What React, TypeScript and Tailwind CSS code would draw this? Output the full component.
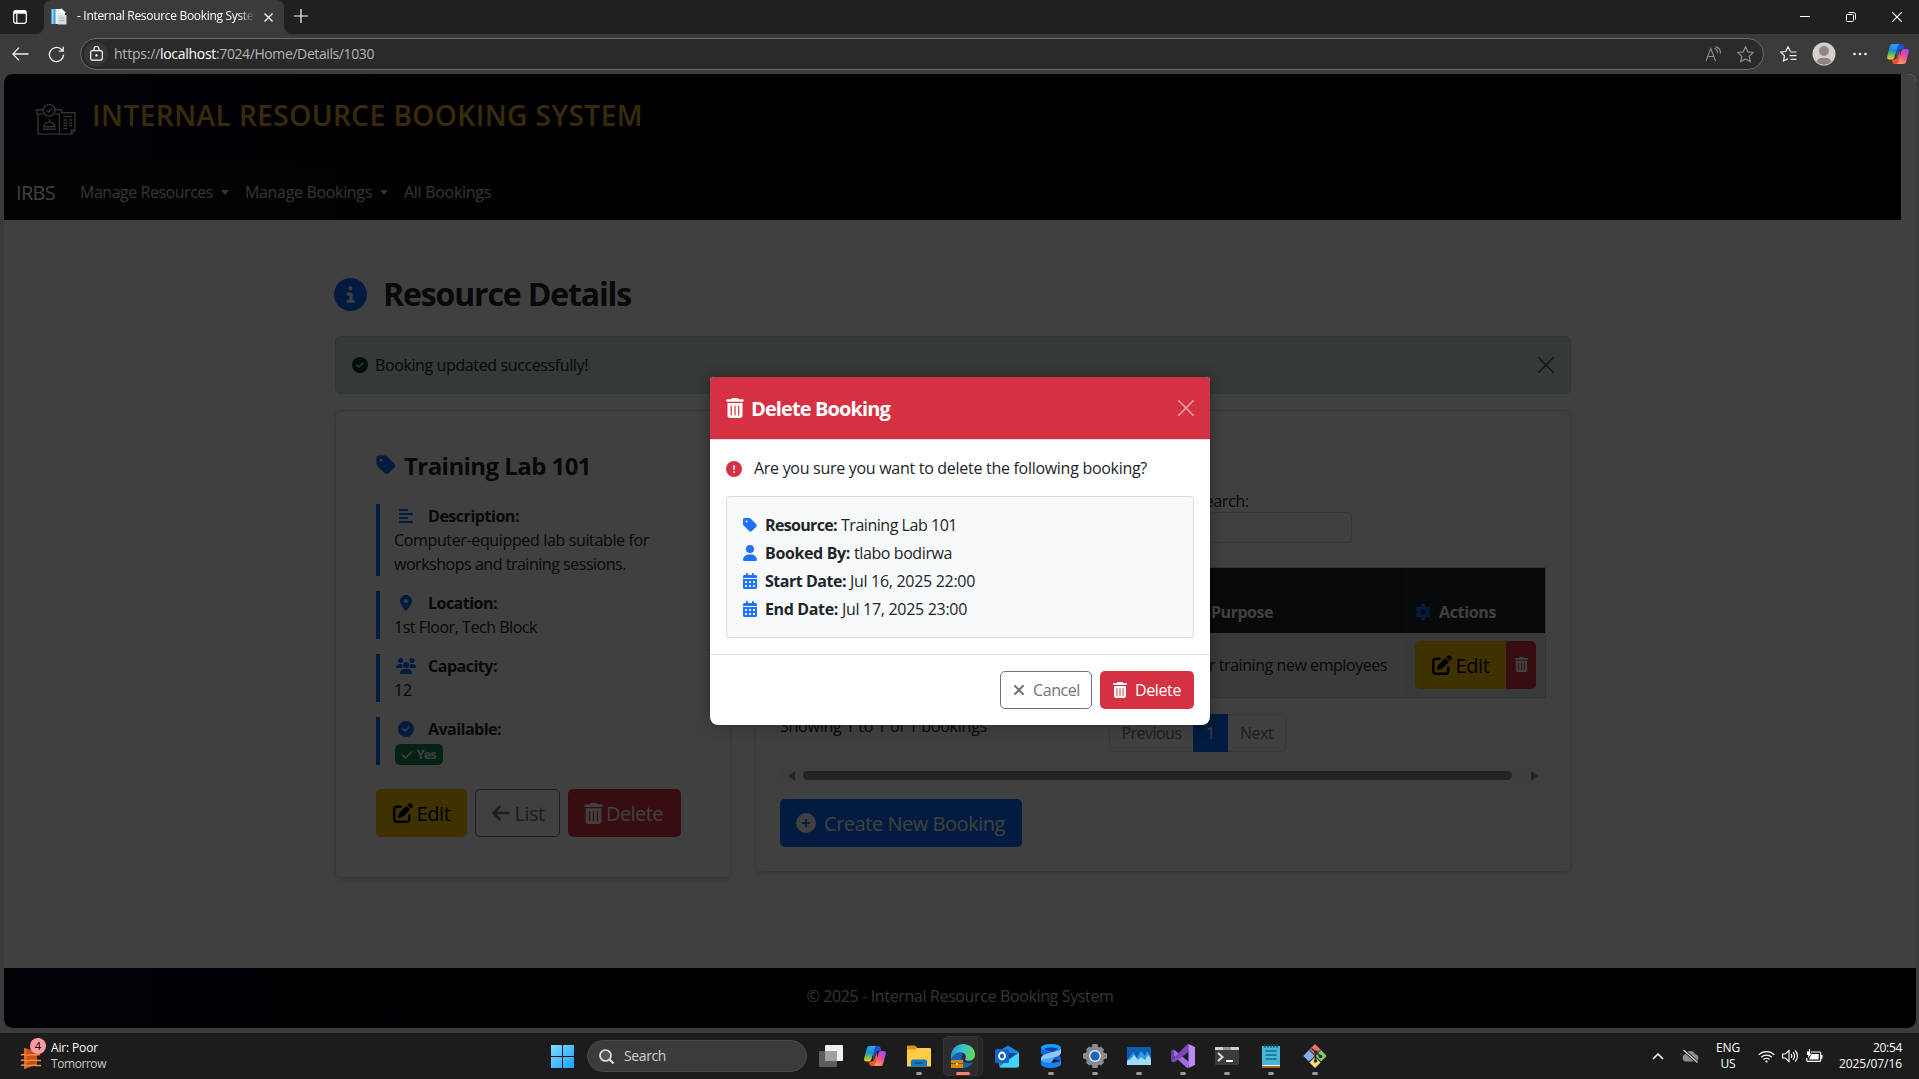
import React, { useLayoutEffect, useRef, useState } from "react";
import {
  FaAlignLeft,
  FaArrowLeft,
  FaCalendarDays,
  FaCheck,
  FaCircleCheck,
  FaCircleExclamation,
  FaCircleInfo,
  FaCirclePlus,
  FaGear,
  FaLocationDot,
  FaPenToSquare,
  FaTag,
  FaTrashCan,
  FaUser,
  FaUsers,
  FaXmark,
} from "react-icons/fa6";

/** One line of text whose letter spacing is adjusted so that it fills `w` pixels. */
function T({ w, children, className = "" }: { w: number; children: string; className?: string }) {
  const ref = useRef<HTMLSpanElement>(null);
  const [spacing, setSpacing] = useState(0);
  useLayoutEffect(() => {
    const el = ref.current;
    if (el) setSpacing((w - el.getBoundingClientRect().width) / children.length);
  }, [w, children]);
  return (
    <span ref={ref} className={"inline-block shrink-0 whitespace-pre " + className} style={{ letterSpacing: spacing }}>
      {children}
    </span>
  );
}

/* ---------- browser chrome ---------- */

function Copilot({ id }: { id: string }) {
  return (
    <svg width="22" height="21" viewBox="0 0 22 21">
      <defs>
        <linearGradient id={id + "a"} x1="0.3" y1="0" x2="0.2" y2="1">
          <stop offset="0" stopColor="#1fa6f5" />
          <stop offset="0.4" stopColor="#1f8fd8" />
          <stop offset="0.7" stopColor="#6cc04a" />
          <stop offset="1" stopColor="#f5d021" />
        </linearGradient>
        <linearGradient id={id + "b"} x1="0.7" y1="0" x2="0.3" y2="1">
          <stop offset="0" stopColor="#9a4fe8" />
          <stop offset="0.5" stopColor="#ee5091" />
          <stop offset="1" stopColor="#ffa15c" />
        </linearGradient>
      </defs>
      <path d="M9 0h5.2c1.500 0 2.200 1 2.600 2.400L17.500 5h-3c-1.600 0-2.400.8-2.900 2.400L9 15z" fill="#1d4fd7" />
      <path d="M13 20H7.800c-1.500 0-2.200-1-2.500-2.300L4.700 15.500h2.800c1.500 0 2.400-1 2.900-2.500L13 6z" fill="#f0502f" />
      <path d="M5.500 0H13c-1.400.2-2 1.200-2.500 2.800L7.600 12.700c-.5 1.800-1.300 2.800-3.100 2.800H2.400C.5 15.500-.3 14 .3 12L2.800 2.500C3.300.8 4 0 5.500 0z" fill={`url(#${id}a)`} />
      <path d="M16.500 20H9c1.400-.2 2-1.200 2.500-2.800l2.900-9.900c.5-1.700 1.300-2.400 3.100-2.400h2.100c1.900 0 2.700 1.300 2.100 3.200l-2.500 9.400c-.5 1.700-1.200 2.500-2.700 2.500z" fill={`url(#${id}b)`} />
    </svg>
  );
}

function TabStrip() {
  return (
    <div className="flex h-[34px] items-center bg-[#202020] text-white">
      <div className="flex h-full w-[44px] items-center bg-[#3b3b3b]">
        <div className="flex h-full w-full items-center rounded-br-[8px] bg-[#202020] pl-[13px]">
          <svg className="-mt-px" width="14" height="14" viewBox="0 0 14 14" fill="none" stroke="#fff" strokeWidth="1.2">
            <rect x="0.7" y="0.7" width="12.600" height="12.600" rx="2.200" />
            <path d="M1 2.800h12M1 1.700h12" strokeWidth="1.800" />
            <path d="M3.800 4v9" />
          </svg>
        </div>
      </div>
      <div className="flex h-full w-[240px] items-center rounded-t-[8px] bg-[#3b3b3b] pl-[6px]">
        <svg className="-mt-px" width="17" height="17" viewBox="0 0 17 17">
          <path d="M1 1h10l4 4v11H1z" fill="#e9eff2" />
          <path d="M1 1h4.500v15H1z" fill="#3f9bd5" />
          <path d="M2 1h1.500v15H2z" fill="#9fd3ee" />
          <path d="M8 7h8.500v9.500H8z" fill="#d5dbe0" />
          <path d="M11 0v5h5" fill="#fff" />
          <path d="M9.500 10h5M9.500 12.500h5" stroke="#a9b4bd" />
        </svg>
        <div className="ml-[10px] w-[180px] overflow-hidden pb-[2px] text-[12px] leading-4 [mask-image:linear-gradient(to_right,#000_90%,transparent_99%)]">
          <T w={187}>- Internal Resource Booking System</T>
        </div>
        <svg className="ml-[7px]" width="9" height="9" viewBox="0 0 9 9" stroke="#fff" strokeWidth="1.300">
          <path d="M.5.5l8 8M8.500.5l-8 8" />
        </svg>
      </div>
      <div className="flex h-full flex-1 items-center bg-[#3b3b3b]">
        <div className="flex h-full w-full items-center rounded-bl-[8px] bg-[#202020] pl-[10px]">
          <svg className="-mt-[2px]" width="14" height="14" viewBox="0 0 14 14" stroke="#fff" strokeWidth="1.200">
            <path d="M7 0v14M0 7h14" />
          </svg>
          <div className="ml-auto mr-[17px] flex items-center gap-[36px]">
            <svg width="10" height="10" viewBox="0 0 10 10" stroke="#fff"><path d="M0 4.500h10" /></svg>
            <svg width="10" height="10" viewBox="0 0 10 10" fill="none" stroke="#fff">
              <rect x="0.500" y="2.500" width="7" height="7" rx="1" />
              <path d="M2.500.5H7.500a2 2 0 0 1 2 2V7.500" />
            </svg>
            <svg width="10" height="10" viewBox="0 0 10 10" stroke="#fff" strokeWidth="1.200"><path d="M0 0l10 10M10 0L0 10" /></svg>
          </div>
        </div>
      </div>
    </div>
  );
}

const STAR = "M8 .8l2.200 4.700 5.100.6-3.800 3.500 1 5.100L8 12.200l-4.500 2.500 1-5.100L.7 6.100l5.100-.6z";

function Toolbar() {
  return (
    <div className="flex h-[40px] items-center bg-[#3b3b3b]">
      <svg className="ml-[12px]" width="17" height="14" viewBox="0 0 17 14" fill="none" stroke="#f0f0f0" strokeWidth="1.300">
        <path d="M7 .6L.8 7 7 13.400M.9 7H16.500" />
      </svg>
      <svg className="ml-[19px]" width="17" height="17" viewBox="0 0 17 17" fill="none" stroke="#f0f0f0" strokeWidth="1.300">
        <path d="M15.600 8.500A7.100 7.100 0 1 1 13 3L15 5M15.200.8V5.200H10.800" />
      </svg>
      <div className="ml-[15px] flex h-[32px] w-[1684px] items-center rounded-full border border-[#6b6b6b] bg-[#2a2a2a] pl-[3px] pr-[9px]">
        <div className="flex h-[24px] w-[24px] items-center justify-center rounded-full bg-[#363636]">
          <svg className="-mt-px" width="13" height="15" viewBox="0 0 13 15" fill="none" stroke="#fff" strokeWidth="1.200">
            <rect x="0.700" y="4.700" width="11.600" height="9.400" rx="1.600" />
            <path d="M4 4.500V3a2.500 2.500 0 0 1 5 0v1.500" />
            <circle cx="6.500" cy="9.400" r="0.600" fill="#fff" />
          </svg>
        </div>
        <div className="ml-[6px] flex text-[14px] leading-5 text-[#b4b4b4]">
          <T w={46}>https://</T>
          <T w={56} className="text-white">localhost</T>
          <T w={158}>:7024/Home/Details/1030</T>
        </div>
        <svg className="ml-auto" width="17" height="16" viewBox="0 0 17 16" fill="none" stroke="#8f8f8f" strokeWidth="1.100">
          <path d="M1 15L5.800 2.500 10.500 15M2.700 10.500h6.200M9.500 2.200a5 5 0 0 1 3 5M10.500.6a7 7 0 0 1 5 7" />
        </svg>
        <svg className="ml-[15px]" width="17" height="17" viewBox="0 0 16 16" fill="none" stroke="#8f8f8f" strokeWidth="1.100"><path d={STAR} /></svg>
      </div>
      <svg className="ml-[16px]" width="17" height="17" viewBox="0 0 17 17" fill="none" stroke="#f0f0f0" strokeWidth="1.200">
        <path d="M10.500 5.500L8 .9 5.800 5.500.7 6.100l3.800 3.600-1 5.300L8 12.600M10.500 6h6M9.500 9.700h7M10.500 13.300h6" />
      </svg>
      <svg className="ml-[15px]" width="24" height="24" viewBox="0 0 24 24">
        <circle cx="12" cy="12" r="11.500" fill="#d3d0cd" />
        <circle cx="12" cy="9" r="5" fill="#8c8886" />
        <path d="M4.500 20a7.600 5 0 0 1 15 0 11.500 11.500 0 0 1-15 0z" fill="#8c8886" />
      </svg>
      <svg className="ml-[17px]" width="14" height="4" viewBox="0 0 14 4" fill="#f0f0f0">
        <circle cx="1.500" cy="2" r="1.300" /><circle cx="7" cy="2" r="1.300" /><circle cx="12.500" cy="2" r="1.300" />
      </svg>
      <div className="ml-[20px]"><Copilot id="tb" /></div>
    </div>
  );
}

/* ---------- page ---------- */

function Caret() {
  return <span className="mt-[1px] h-0 w-0 border-x-[4.500px] border-t-[5px] border-x-transparent border-t-[#d4d4d4]" />;
}

function SiteHeader() {
  return (
    <header className="w-[1897px]">
      <div className="flex h-[90px] bg-linear-to-r from-[#07071c] to-black to-85% pl-[32px] pt-[21px]">
        <svg className="mt-[8px]" width="40" height="33" viewBox="0 0 41 33" fill="none" stroke="#c4c4c4" strokeWidth="1.500">
          <path d="M2 11v18.500a2 2 0 0 0 2 2h32l4-4V9.500H25.500M8 11H1V6.500h7M19 6.500h7v3M19 11h5v20.500M36 31.500v-4h4" />
          <circle cx="13.500" cy="7" r="6" />
          <path d="M10.800 7l2 2 3.500-4.200M7 26.500h13.500M8 24a5.800 5.800 0 0 1 11.500 0zM13.800 18v-2M28 13.500h9M28 17h4M34 17h3M28 20h4M34 20h3M28 23h4M34 23h3M28 26h4" />
        </svg>
        <h1 className="-mt-px ml-[16px] text-[28px] font-semibold leading-[42px] text-[#e0aa30]">
          <T w={551}>INTERNAL RESOURCE BOOKING SYSTEM</T>
        </h1>
      </div>
      <nav className="flex h-[56px] items-center bg-linear-to-r from-[#120606] to-black pl-[12px] text-[16px] text-[#d4d4d4]">
        <span className="pt-px text-[20px] text-white"><T w={39}>IRBS</T></span>
        <span className="ml-[25px] flex items-center gap-[8px]"><T w={133}>Manage Resources</T><Caret /></span>
        <span className="ml-[16px] flex items-center gap-[8px]"><T w={127}>Manage Bookings</T><Caret /></span>
        <span className="ml-[16px]"><T w={87}>All Bookings</T></span>
      </nav>
    </header>
  );
}

function Detail({ icon, label, w, children }: { icon: React.ReactNode; label: string; w: number; children: React.ReactNode }) {
  return (
    <div className="border-l-4 border-[#0d6efd] pl-[15px]">
      <div className="flex h-[24px] items-center">
        <span className="flex w-[22px] justify-center text-[16px] text-[#0d6efd]">{icon}</span>
        <T w={w} className="ml-[11px] font-bold">{label}</T>
      </div>
      <div className="-ml-px">{children}</div>
    </div>
  );
}

function ResourceCard() {
  return (
    <section className="h-[468px] w-[396px] rounded-[6px] border border-[#dcdcdc] px-[40px] pt-[39px] shadow-[0_2px_4px_rgba(0,0,0,0.12)]">
      <h2 className="-ml-px flex h-[32px] items-center text-[24px] font-bold">
        <FaTag className="-mt-[2px] text-[22px] text-[#0d6efd]" />
        <T w={187} className="ml-[7px]">Training Lab 101</T>
      </h2>
      <div className="mt-[22px] flex flex-col gap-[15px] leading-6">
        <Detail icon={<FaAlignLeft />} label="Description:" w={91}>
          <div><T w={255}>Computer-equipped lab suitable for</T></div>
          <div><T w={232}>workshops and training sessions.</T></div>
        </Detail>
        <Detail icon={<FaLocationDot />} label="Location:" w={69}>
          <div><T w={143}>1st Floor, Tech Block</T></div>
        </Detail>
        <Detail icon={<FaUsers className="text-[20px]" />} label="Capacity:" w={69}>
          <div><T w={18}>12</T></div>
        </Detail>
        <Detail icon={<FaCircleCheck />} label="Available:" w={73}>
          <div className="ml-px flex h-[24px] items-end">
            <span className="flex h-[21px] w-[48px] items-center rounded-[5px] bg-[#198754] pl-[6px] text-[12px] font-bold leading-[21px] text-white">
              <FaCheck className="mr-[4px]" /><T w={19}>Yes</T>
            </span>
          </div>
        </Detail>
      </div>
      <div className="mt-[24px] flex gap-[8px] text-[20px]">
        <div className="flex h-[48px] w-[91px] items-center justify-center gap-[4px] rounded-[5px] bg-[#ffc107] text-black">
          <FaPenToSquare /><T w={34} className="pt-px">Edit</T>
        </div>
        <div className="flex h-[48px] w-[85px] items-center justify-center gap-[4px] rounded-[5px] border border-[#6c757d] text-[#6c757d]">
          <FaArrowLeft /><T w={30} className="pt-px">List</T>
        </div>
        <div className="flex h-[48px] w-[113px] items-center gap-[2px] rounded-[5px] bg-[#dc3545] pl-[15px] text-white">
          <FaTrashCan className="text-[21px]" /><T w={57} className="pt-px">Delete</T>
        </div>
      </div>
    </section>
  );
}

function BookingsCard() {
  return (
    <section className="h-[462px] w-[816px] rounded-[6px] border border-[#dcdcdc] px-[24px] pt-[78px] shadow-[0_2px_4px_rgba(0,0,0,0.12)]">
      <div className="ml-[416px] w-[156px] leading-6">
        <div><T w={53}>Search:</T></div>
        <div className="-mt-px h-[31px] rounded-[4px] border border-[#d4d8dc]" />
      </div>
      <div className="mt-[24px] border border-[#c9d0cd] bg-[#212529] font-bold text-white">
        <div className="flex h-[65px] items-end leading-6">
          <div className="flex h-full w-[626px] items-end border-r border-[#32383e] pb-[9px] pl-[430px]"><T w={62}>Purpose</T></div>
          <div className="flex items-center pb-[9px] pl-[8px]">
            <FaGear className="text-[16px] text-[#0d6efd]" />
            <T w={57} className="ml-[8px]">Actions</T>
          </div>
        </div>
        <div className="flex h-[64px] items-center bg-[#e4eae7] font-normal text-[#212529]">
          <div className="flex h-full w-[626px] items-center justify-end border-r border-[#d5dbd8] pr-[19px]">
            <T w={195}>For training new employees</T>
          </div>
          <div className="ml-[8px] flex h-[48px]">
            <div className="flex w-[91px] items-center justify-center gap-[4px] rounded-l-[5px] bg-[#ffc107] text-[20px] text-black">
              <FaPenToSquare /><T w={34} className="pt-px">Edit</T>
            </div>
            <div className="flex w-[30px] items-center justify-center rounded-r-[5px] bg-[#dc3545] text-white">
              <FaTrashCan className="-mt-px text-[15px]" />
            </div>
          </div>
        </div>
      </div>
      <div className="mt-[16px] flex">
        <div className="w-[329px] leading-6"><T w={207}>Showing 1 to 1 of 1 bookings</T></div>
        <div className="flex h-[38px] rounded-[5px] border border-[#dee2e6] text-[#6c757d]">
          <div className="flex w-[83px] items-center justify-center"><T w={60}>Previous</T></div>
          <div className="-my-px flex w-[35px] items-center justify-center bg-[#0d6efd] text-white">1</div>
          <div className="flex w-[57px] items-center justify-center"><T w={33}>Next</T></div>
        </div>
      </div>
      <div className="mt-[16px] flex h-[15px] items-center bg-[#fcfcfc]">
        <span className="ml-[8px] border-y-[5px] border-r-[7px] border-y-transparent border-r-[#8a8a8a]" />
        <span className="ml-[8px] h-[9px] w-[709px] rounded-full bg-[#8a8a8a]" />
        <span className="ml-[19px] border-y-[5px] border-l-[7px] border-y-transparent border-l-[#8a8a8a]" />
      </div>
      <div className="mt-[16px] flex h-[48px] w-[242px] items-center rounded-[5px] bg-[#0d6efd] pl-[16px] text-[20px] text-white">
        <FaCirclePlus /><T w={181} className="ml-[8px] pt-px">Create New Booking</T>
      </div>
    </section>
  );
}

function DeleteModal() {
  const rows = [
    { icon: <FaTag />, label: "Resource:", lw: 72, value: "Training Lab 101", vw: 116 },
    { icon: <FaUser />, label: "Booked By:", lw: 85, value: "tlabo bodirwa", vw: 98 },
    { icon: <FaCalendarDays />, label: "Start Date:", lw: 81, value: "Jul 16, 2025 22:00", vw: 125 },
    { icon: <FaCalendarDays />, label: "End Date:", lw: 73, value: "Jul 17, 2025 23:00", vw: 125 },
  ];
  return (
    <div className="absolute left-[706px] top-[303px] h-[348px] w-[500px] rounded-[8px] rounded-t-[4px] bg-white text-[16px] text-[#212529] shadow-[0_0_14px_rgba(0,0,0,0.35)]">
      <div className="flex h-[62px] items-center rounded-t-[4px] bg-[#d63043] px-[16px] text-white">
        <FaTrashCan className="-ml-px text-[20px]" />
        <T w={139} className="ml-[6px] pt-[2px] text-[20px] font-bold">Delete Booking</T>
        <svg className="ml-auto" width="16" height="16" viewBox="0 0 16 16" stroke="#fff" strokeWidth="1.600" strokeLinecap="round" opacity="0.550">
          <path d="M.8.8l14.400 14.400M15.200.8L.8 15.200" />
        </svg>
      </div>
      <div className="h-[215px] border-t border-[#dee2e6] px-[16px] pt-[16px]">
        <div className="flex h-[26px] items-center">
          <FaCircleExclamation className="-mt-px text-[#d63043]" />
          <T w={393} className="-mt-[2px] ml-[12px]">Are you sure you want to delete the following booking?</T>
        </div>
        <div className="mt-[14px] h-[142px] rounded-[4px] border border-[#d9dcdf] bg-[#f8f9fa] px-[16px] pt-[14px]">
          {rows.map((r) => (
            <div key={r.label} className="flex h-[28px] items-center">
              <span className="flex w-[14px] justify-center text-[16px] text-[#1f72fc]">{r.icon}</span>
              <T w={r.lw} className="ml-[8px] font-bold">{r.label}</T>
              <T w={r.vw} className="ml-[4px]">{r.value}</T>
            </div>
          ))}
        </div>
      </div>
      <div className="flex h-[71px] items-start justify-end gap-[8px] border-t border-[#dee2e6] px-[16px] pt-[16px]">
        <div className="flex h-[38px] w-[92px] items-center rounded-[5px] border border-[#6c757d] pl-[10px] text-[#6c757d]">
          <FaXmark /><T w={47} className="ml-[6px]">Cancel</T>
        </div>
        <div className="flex h-[38px] w-[94px] items-center rounded-[5px] bg-[#d63043] pl-[13px] text-white">
          <FaTrashCan className="-ml-px" /><T w={46} className="ml-[7px]">Delete</T>
        </div>
      </div>
    </div>
  );
}

function Page() {
  return (
    <div className="bg-[#3b3b3b] pb-[5px] pl-[4px] pr-[3px]">
      <div className="relative flex h-[954px] flex-col overflow-hidden rounded-[8px] bg-white text-[16px] text-[#212529]">
        <SiteHeader />
        <main className="ml-[331px] h-[748px] w-[1236px] pt-[56px]">
          <h1 className="flex h-[38px] items-center text-[32px] font-bold">
            <FaCircleInfo className="-ml-px -mt-px text-[33px] text-[#0d6efd]" />
            <T w={248} className="-mt-[2px] ml-[16px]">Resource Details</T>
          </h1>
          <div className="mt-[22px] flex h-[58px] items-center rounded-[5px] border border-[#bcd5ca] bg-[#d1e1da] px-[16px] text-[#0a3622]">
            <FaCircleCheck className="text-[16px]" />
            <T w={213} className="ml-[7px]">Booking updated successfully!</T>
            <svg className="ml-auto" width="16" height="16" viewBox="0 0 16 16" stroke="#000" strokeWidth="1.600" strokeLinecap="round" opacity="0.600">
              <path d="M.8.8l14.400 14.400M15.200.8L.8 15.200" />
            </svg>
          </div>
          <div className="mt-[16px] flex items-start justify-between">
            <ResourceCard />
            <BookingsCard />
          </div>
        </main>
        <footer className="flex h-[60px] items-center justify-center bg-linear-to-r from-[#07071c] to-black to-85% pb-[4px] text-[#d4d4d4]">
          <T w={307}>© 2025 - Internal Resource Booking System</T>
        </footer>
        <div className="absolute inset-0 bg-black/75" />
        <DeleteModal />
      </div>
    </div>
  );
}

/* ---------- taskbar ---------- */

function Slot({ children, running = false }: { children: React.ReactNode; running?: boolean }) {
  return (
    <div className="relative flex h-full w-[44px] items-center justify-center">
      {children}
      {running && <span className="absolute bottom-[4px] left-[19px] h-[3px] w-[6px] rounded-full bg-[#9a9a9a]" />}
    </div>
  );
}

function Taskbar() {
  return (
    <div className="relative flex h-[46px] items-center bg-[#1c1c1c] text-[12px] leading-4 text-white">
      <svg className="ml-[20px]" width="28" height="34" viewBox="0 0 28 34">
        <path d="M4 9l13 3v14L4 30z" fill="#c94f12" />
        <path d="M4 9l3 1v19l-3 1z" fill="#e0671f" />
        <path d="M1 16c3-1.500 5 1 8 0s5 .5 11-.5M1 21.500c3-1.500 5 1 8 0s5 .5 12 0M1 26.500c3-1.500 5 1 8 0s5 .5 12 0" stroke="#f08a4a" strokeWidth="1.500" fill="none" />
      </svg>
      <span className="absolute left-[30px] top-[5px] flex h-[16px] w-[16px] items-center justify-center rounded-full bg-[#ff99a4] text-[11px] text-black">4</span>
      <div className="ml-[3px] flex flex-col items-start">
        <T w={47}>Air: Poor</T>
        <T w={55} className="text-[#c8c8c8]">Tomorrow</T>
      </div>

      <div className="absolute left-[551px] top-0 flex h-full items-center">
        <svg width="23" height="23" viewBox="0 0 23 23">
          <defs>
            <linearGradient id="win" x1="0" y1="0" x2="1" y2="1" gradientUnits="objectBoundingBox">
              <stop offset="0" stopColor="#7fdcff" />
              <stop offset="1" stopColor="#1a9fff" />
            </linearGradient>
          </defs>
          <path d="M0 0h11v11H0zM12 0h11v11H12zM0 12h11v11H0zM12 12h11v11H12z" fill="url(#win)" />
        </svg>
        <div className="ml-[13px] flex h-[32px] w-[220px] items-center rounded-full border border-[#484848] bg-[#3b3b3b] pl-[11px] text-[14px] text-[#d0d0d0]">
          <svg width="15" height="15" viewBox="0 0 15 15" fill="none" stroke="#e2e2e2" strokeWidth="1.700">
            <circle cx="6.500" cy="6.500" r="5.500" fill="#555" /><path d="M10.500 10.500l4 4" strokeWidth="2" />
          </svg>
          <T w={42} className="ml-[10px]">Search</T>
        </div>
        <div className="ml-[2px] flex h-full">
          <Slot>
            <svg width="24" height="22" viewBox="0 0 24 22">
              <rect x="6" width="18" height="16" rx="1" fill="#f0f0f0" />
              <rect y="6" width="18" height="16" rx="1" fill="#5c5c5c" />
              <path d="M6 6h12v10H6z" fill="#a0a0a0" />
            </svg>
          </Slot>
          <Slot><Copilot id="tk" /></Slot>
          <Slot running>
            <svg width="24" height="22" viewBox="0 0 24 22">
              <path d="M0 1.500A1 1 0 0 1 1 .5h7l2.500 2.500V6H0z" fill="#e0940c" />
              <path d="M0 4.500h8l2-1.500h13a1 1 0 0 1 1 1v17.500H0z" fill="#ffcc45" />
              <path d="M4 21.500v-5a2 2 0 0 1 2-2h12a2 2 0 0 1 2 2v5z" fill="#0f78c8" />
              <path d="M8 18h8" stroke="#07508f" strokeWidth="1.500" />
            </svg>
          </Slot>
          <div className="relative flex h-full w-[44px] items-center justify-center">
            <span className="absolute left-[2px] top-[3px] h-[40px] w-[40px] rounded-[5px] border border-[#343434] bg-[#262626]" />
            <span className="absolute left-[2px] top-[3px] h-[40px] w-[35px] rounded-[5px] border border-[#363636] bg-[#2c2c2c]" />
            <svg className="relative" width="24" height="24" viewBox="0 0 24 24">
              <defs>
                <linearGradient id="edgeTop" x1="0" y1="0.300" x2="1" y2="0.400">
                  <stop offset="0" stopColor="#1f9ad8" /><stop offset="0.500" stopColor="#35c3cf" /><stop offset="1" stopColor="#66dd55" />
                </linearGradient>
              </defs>
              <path d="M.5 15C0 22 8 25.500 15 23.700c3.500-.9 6-3.200 7.500-5.700-4 2-10 1.500-11.500-3-.6-2-.2-4 1.500-5C8 7.500 2 9.500.5 15z" fill="#1560b4" />
              <path d="M0 12.500C0 5 5.500 0 12 0c7.500 0 12 5.200 12 10.500 0 4-3 6.300-6.300 6.300-3.200 0-4-1.300-3.200-2.600 1-1.700.4-5.700-4.700-5.700C5.500 8.500 1 11 .5 16 .1 14.800 0 13.500 0 12.500z" fill="url(#edgeTop)" />
              <rect y="16" width="12" height="8" fill="#d9860f" />
              <path d="M0 19.500h12" stroke="#8a4b05" /><rect x="5" y="19" width="2" height="2" fill="#ffd76a" />
            </svg>
            <span className="absolute bottom-[4px] left-[15px] h-[3px] w-[14px] rounded-full bg-[#f4836c]" />
          </div>
          <Slot>
            <svg width="24" height="23" viewBox="0 0 24 23">
              <path d="M4 6l9-5.500L24 7v13a2.500 2.500 0 0 1-2.500 2.500H6A2.500 2.500 0 0 1 4 20z" fill="#1f88d9" />
              <path d="M24 8L9 18l-5 4.500h17.500A2.500 2.500 0 0 0 24 20z" fill="#45d3f7" />
              <path d="M13 8h9l-8 6z" fill="#0b3f96" />
              <rect y="4" width="14" height="14" rx="1.500" fill="#1066c4" />
              <ellipse cx="7" cy="11" rx="3" ry="3.500" fill="none" stroke="#fff" strokeWidth="1.800" />
            </svg>
          </Slot>
          <Slot running>
            <svg width="20" height="24" viewBox="0 0 20 24">
              <path d="M0 3.500V8c0 2 1.500 3.500 4 4.200L20 17v-2c0-2.500-1.500-4-4-4.800z" fill="#1264e0" />
              <ellipse cx="10" cy="3.800" rx="10" ry="3.800" fill="#12a0fa" />
              <path d="M3 5.500c4 2 10 2 14 0v-1c-4-1.500-10-1.500-14 0z" fill="#0a3fae" />
              <path d="M20 4v4.500c0 2-1.500 3.200-4 4L0 17v-2c0-2.500 1.500-4 4-4.800l12-3.500C18.500 6 20 5.200 20 4z" fill="#8cc6ff" />
              <path d="M0 15.500V20c0 2.300 4.500 4 10 4s10-1.700 10-4v-4.500c-1 2.200-5 3.300-10 3.300s-9-1.100-10-3.300z" fill="#1682f2" />
              <path d="M0 15.500c0 2 4 3.500 10 3.500l4-5.500L9.500 14z" fill="#4ba4ff" />
            </svg>
          </Slot>
          <Slot running>
            <svg width="24" height="24" viewBox="0 0 24 24">
              <g fill="#858c92">
                <circle cx="12" cy="12" r="9.500" />
                <path d="M9.500 0h5l1 4h-7zM9.500 24h5l1-4h-7zM0 9.500v5l4 1v-7zM24 9.500v5l-4 1v-7z" />
                <path d="M3 5.500L6 2.500l3.500 2-4.500 5zM21 5.500l-3-3-3.500 2 4.500 5zM3 18.500l3 3 3.500-2-4.500-5zM21 18.500l-3 3-3.500-2 4.500-5z" />
              </g>
              <circle cx="12" cy="12" r="6" fill="#e4e9ed" />
              <circle cx="12" cy="12" r="4.500" fill="#1767b5" />
            </svg>
          </Slot>
          <Slot running>
            <svg width="24" height="18" viewBox="0 0 24 18">
              <rect width="24" height="18" rx="1" fill="#0c5fae" />
              <path d="M0 13l3-3 3-5 4 6 4-7 4 5 2-5 4 6v8H0z" fill="#2e9de2" />
              <path d="M0 14l4-2 3-4 4 5 3-3 4 3 3-5 3 4v6H0z" fill="#a3dcfb" />
            </svg>
          </Slot>
          <Slot running>
            <svg width="24" height="24" viewBox="0 0 24 24">
              <path d="M0 7l3-1.500 15 12.500-1 6-1.500-.5L3 12z" fill="#a06ae0" />
              <path d="M0 7l3-1.500V18L0 16.800z" fill="#6b3fa8" />
              <path d="M3 18.500L0 17 16 .5 17.500 0V8z" fill="#7a49bb" />
              <path d="M17.500 0L24 3v18l-6.500 3z" fill="#bb8bf5" />
            </svg>
          </Slot>
          <Slot running>
            <svg width="24" height="18" viewBox="0 0 24 18">
              <rect width="24" height="18" rx="1" fill="#3c3c3c" />
              <path d="M0 3V1a1 1 0 0 1 1-1h22a1 1 0 0 1 1 1v2z" fill="#d0d0d0" />
              <path d="M8 0h8v3H8z" fill="#969696" />
              <path d="M3 6l4.500 4L3 14" fill="none" stroke="#ddd" strokeWidth="2" />
              <path d="M11 14h7" stroke="#fff" strokeWidth="2" />
            </svg>
          </Slot>
          <Slot running>
            <svg width="18" height="24" viewBox="0 0 18 24">
              <path d="M0 2h18v19H0z" fill="#45b8d6" />
              <path d="M0 21h18v1.500H0z" fill="#f0f0f0" />
              <path d="M0 22.500h18V24H0z" fill="#b5560d" />
              <path d="M3 0v3.500M6 0v3.500M9 0v3.500M12 0v3.500M15 0v3.500" stroke="#0d4a63" strokeWidth="1.500" />
              <path d="M3.500 7h11M3.500 11h11M3.500 15h11" stroke="#136c8a" strokeWidth="1.500" />
            </svg>
          </Slot>
          <Slot running>
            <svg width="24" height="24" viewBox="0 0 24 24">
              <path d="M12 0l5.500 5.500-5.500 5.500-5.500-5.500z" fill="#f0716c" />
              <path d="M6 6l5.700 6L6 17.500.3 12z" fill="#7fb0f5" />
              <path d="M18 6l5.700 6-5.700 5.500-5.700-5.500z" fill="#7fcf60" />
              <path d="M12 13l5.500 5.500L12 24l-5.500-5.500z" fill="#ffe080" />
              <path d="M8.500 4.500l4 3.500v9M13 8l4.500 4.500" fill="none" stroke="#2a2a2a" strokeWidth="1.500" />
              <circle cx="12.700" cy="8" r="1.800" fill="#2a2a2a" /><circle cx="12.500" cy="17" r="1.800" fill="#2a2a2a" /><circle cx="17.500" cy="12.500" r="1.800" fill="#2a2a2a" />
            </svg>
          </Slot>
        </div>
      </div>

      <div className="ml-auto mr-[17px] flex items-center">
        <svg width="12" height="7" viewBox="0 0 12 7" fill="none" stroke="#fff" strokeWidth="1.500"><path d="M1 6l5-5 5 5" /></svg>
        <svg className="ml-[18px]" width="17" height="14" viewBox="0 0 17 14">
          <path d="M4 12.500a3.800 3.800 0 0 1-.3-7.500A5 5 0 0 1 13 5.200a3.700 3.700 0 0 1 .5 7.300z" fill="#8c8c8c" />
          <path d="M1.500 1l14 12.500" stroke="#1c1c1c" strokeWidth="3" />
          <path d="M1.500 1l14 12.500" stroke="#d8d8d8" strokeWidth="1.200" />
        </svg>
        <div className="ml-[17px] flex flex-col items-center"><T w={24}>ENG</T><T w={15}>US</T></div>
        <svg className="ml-[18px]" width="17" height="13" viewBox="0 0 17 13" fill="none" stroke="#fff" strokeWidth="1.200">
          <path d="M.7 4.800a11 11 0 0 1 15.600 0M3.200 7.300a7.600 7.600 0 0 1 10.600 0M5.500 9.600a4.300 4.300 0 0 1 6 0" /><circle cx="8.500" cy="11.500" r="1.100" fill="#fff" stroke="none" />
        </svg>
        <svg className="ml-[7px]" width="17" height="14" viewBox="0 0 17 14" fill="none" stroke="#fff" strokeWidth="1.100">
          <path d="M.6 5v4h2.600L7 12.500v-11L3.200 5zM9 5a3 3 0 0 1 0 4M11 3.200a5.500 5.500 0 0 1 0 7.600M13.200 1.500a8 8 0 0 1 0 11" />
        </svg>
        <svg className="ml-[7px]" width="17" height="14" viewBox="0 0 17 14">
          <path d="M5 3h8.500a1.200 1.200 0 0 1 1.200 1.200v7a1.200 1.200 0 0 1-1.200 1.200H2A1.200 1.200 0 0 1 .8 11.200V9" fill="none" stroke="#fff" strokeWidth="1.200" />
          <path d="M5.500 5h7.200v5.500H3zM15 6h1.500v3.500H15zM3 0v2.500H1v3.500h1.300L2 9l3.500-4.500H4V0z" fill="#fff" />
        </svg>
        <div className="ml-[16px] flex flex-col items-end"><T w={29}>20:54</T><T w={63}>2025/07/16</T></div>
      </div>
    </div>
  );
}

export default function App() {
  return (
    <div className="h-[1079px] w-[1919px] overflow-hidden bg-[#3b3b3b] font-['Open_Sans','Noto_Sans',sans-serif]">
      <TabStrip />
      <Toolbar />
      <Page />
      <Taskbar />
    </div>
  );
}
